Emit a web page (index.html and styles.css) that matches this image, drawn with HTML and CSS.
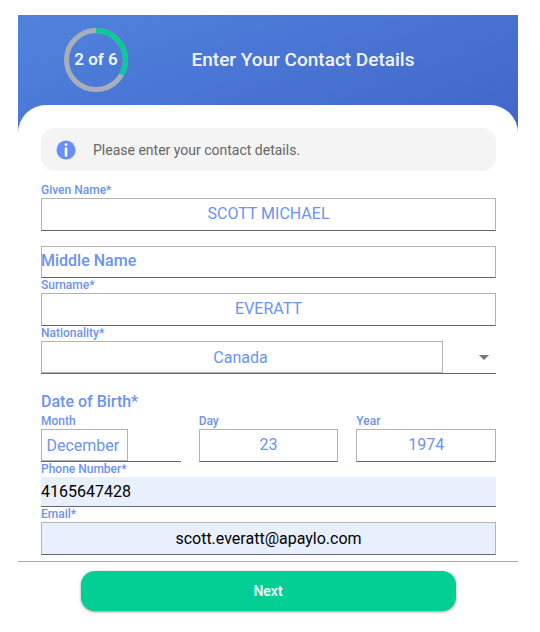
FILE: index.html
```html
<!DOCTYPE html>
<html lang="en">
<head>
    <meta charset="UTF-8">
    <meta name="viewport" content="width=device-width, initial-scale=1.0">
    <title>Enter Your Contact Details</title>
    <link rel="stylesheet" href="styles.css">
</head>
<body>
    <header class="header">
        <div class="progress">
            <svg class="ring" viewBox="0 0 64 64" aria-hidden="true">
                <circle cx="32" cy="32" r="29.5" fill="none" stroke="#a9aeb8" stroke-width="5"/>
                <circle cx="32" cy="32" r="29.5" fill="none" stroke="#0bcb95" stroke-width="5" pathLength="6" stroke-dasharray="2 4" transform="rotate(-90 32 32)"/>
            </svg>
            <span class="step">2 of 6</span>
        </div>
        <h1 class="title">Enter Your Contact Details</h1>
    </header>

    <form class="card">
        <div class="fields">
            <div class="info">
                <svg class="info-icon" viewBox="0 0 20 20" aria-hidden="true">
                    <circle cx="10" cy="10" r="9.5" fill="#668ffb"/>
                    <circle cx="10" cy="4.7" r="1.4" fill="#fff"/>
                    <path d="M10 8.6v6.8" stroke="#fff" stroke-width="2.6" stroke-linecap="round"/>
                </svg>
                <p>Please enter your contact details.</p>
            </div>

            <div class="field">
                <label for="given">Given Name*</label>
                <input class="control" type="text" id="given" value="SCOTT MICHAEL" required>
            </div>
            <div class="field floating">
                <label for="middle">Middle Name</label>
                <input class="control" type="text" id="middle">
            </div>
            <div class="field">
                <label for="surname">Surname*</label>
                <input class="control" type="text" id="surname" value="EVERATT" required>
            </div>
            <div class="field">
                <label for="nationality">Nationality*</label>
                <div class="select">
                    <select id="nationality" required>
                        <option>Canada</option>
                    </select>
                    <svg class="arrow" viewBox="0 0 10 5" aria-hidden="true"><path d="M0 0h10L5 5z" fill="#757575"/></svg>
                </div>
            </div>

            <fieldset class="birth">
                <legend>Date of Birth*</legend>
                <div class="dates">
                    <div class="field">
                        <label for="month">Month</label>
                        <div class="select">
                            <select id="month" required>
                                <option>December</option>
                            </select>
                        </div>
                    </div>
                    <div class="field">
                        <label for="day">Day</label>
                        <input class="control" type="text" id="day" value="23" required>
                    </div>
                    <div class="field">
                        <label for="year">Year</label>
                        <input class="control" type="text" id="year" value="1974" required>
                    </div>
                </div>
            </fieldset>

            <div class="field">
                <label for="phone">Phone Number*</label>
                <input class="control filled phone" type="tel" id="phone" value="4165647428" required>
            </div>
            <div class="field">
                <label for="email">Email*</label>
                <input class="control filled" type="email" id="email" value="scott.everatt@apaylo.com" required>
            </div>
        </div>

        <div class="footer">
            <button class="next" type="submit">Next</button>
        </div>
    </form>
</body>
</html>
```

FILE: styles.css
```css
* {
    margin: 0;
    padding: 0;
    box-sizing: border-box;
    font-family: Roboto, sans-serif;
}
body {
    padding: 15px 22px 15px 18px;
    background-color: #fff;
    color: #6c93f0;
}
.header {
    display: flex;
    align-items: center;
    padding: 13px 40px 41px 46px;
    background: linear-gradient(160deg, #5083dd, #4265ca);
    color: #f1f5ff;
}
.progress {
    display: grid;
    place-items: center;
    width: 64px;
    height: 64px;
}
.ring,
.step {
    grid-area: 1 / 1;
}
.ring {
    width: 64px;
    height: 64px;
}
.step {
    padding-bottom: 2px;
    font-size: 17px;
    font-weight: 600;
}
.title {
    flex: 1;
    padding-bottom: 2px;
    font-size: 19px;
    font-weight: 500;
    text-align: center;
}
.card {
    position: relative;
    margin-top: -28px;
    border-radius: 28px 28px 0 0;
    background-color: #fff;
}
.fields {
    padding: 23px 22px 6px 23px;
}
.info {
    display: flex;
    align-items: center;
    gap: 17px;
    height: 43px;
    margin-bottom: 12px;
    padding: 0 15px;
    border-radius: 14px;
    background-color: #f4f4f4;
    color: #666;
    font-size: 14px;
}
.info-icon {
    width: 20px;
    height: 20px;
}
.field label {
    display: block;
    font-size: 12px;
    font-weight: 500;
    line-height: 15px;
}
.control,
select {
    display: block;
    width: 100%;
    height: 33px;
    padding-bottom: 2px;
    border: 1px solid #b3b3b3;
    border-radius: 0;
    outline: none;
    background-color: transparent;
    color: inherit;
    font-size: 16px;
    text-align: center;
}
.control {
    border-bottom-color: #666;
}
.floating {
    position: relative;
    padding-top: 15px;
}
.floating .control {
    height: 32px;
}
.floating label {
    position: absolute;
    left: 0;
    bottom: 2px;
    font-size: 16px;
    line-height: 30px;
}
.select {
    display: flex;
    align-items: center;
    padding-right: 53px;
    border-bottom: 1px solid #666;
}
.select select {
    flex: none;
    height: 32px;
    padding-right: 3px;
    padding-bottom: 0;
    appearance: none;
}
.arrow {
    flex: none;
    width: 10px;
    height: 5px;
    margin-left: 36px;
}
.birth {
    padding-top: 18px;
    border: none;
}
.birth legend {
    float: left;
    width: 100%;
    padding-bottom: 2px;
    font-size: 16px;
    font-weight: 500;
    line-height: 20px;
}
.dates {
    clear: both;
    display: grid;
    grid-template-columns: repeat(3, 1fr);
    gap: 18px;
}
.filled {
    padding-bottom: 0;
    background-color: #e8f0fd;
    color: #000;
}
.phone {
    height: 30px;
    border-width: 0 0 1px;
    text-align: left;
}
.footer {
    padding-top: 9px;
    border-top: 1px solid #aaa;
}
.next {
    display: block;
    width: 75%;
    height: 40px;
    margin: 0 auto;
    border: none;
    border-radius: 14px;
    background-color: #03cf94;
    box-shadow: 0 1px 3px rgba(0, 0, 0, 0.4);
    color: #f1fffa;
    font-size: 14px;
    font-weight: 600;
    cursor: pointer;
}
```
